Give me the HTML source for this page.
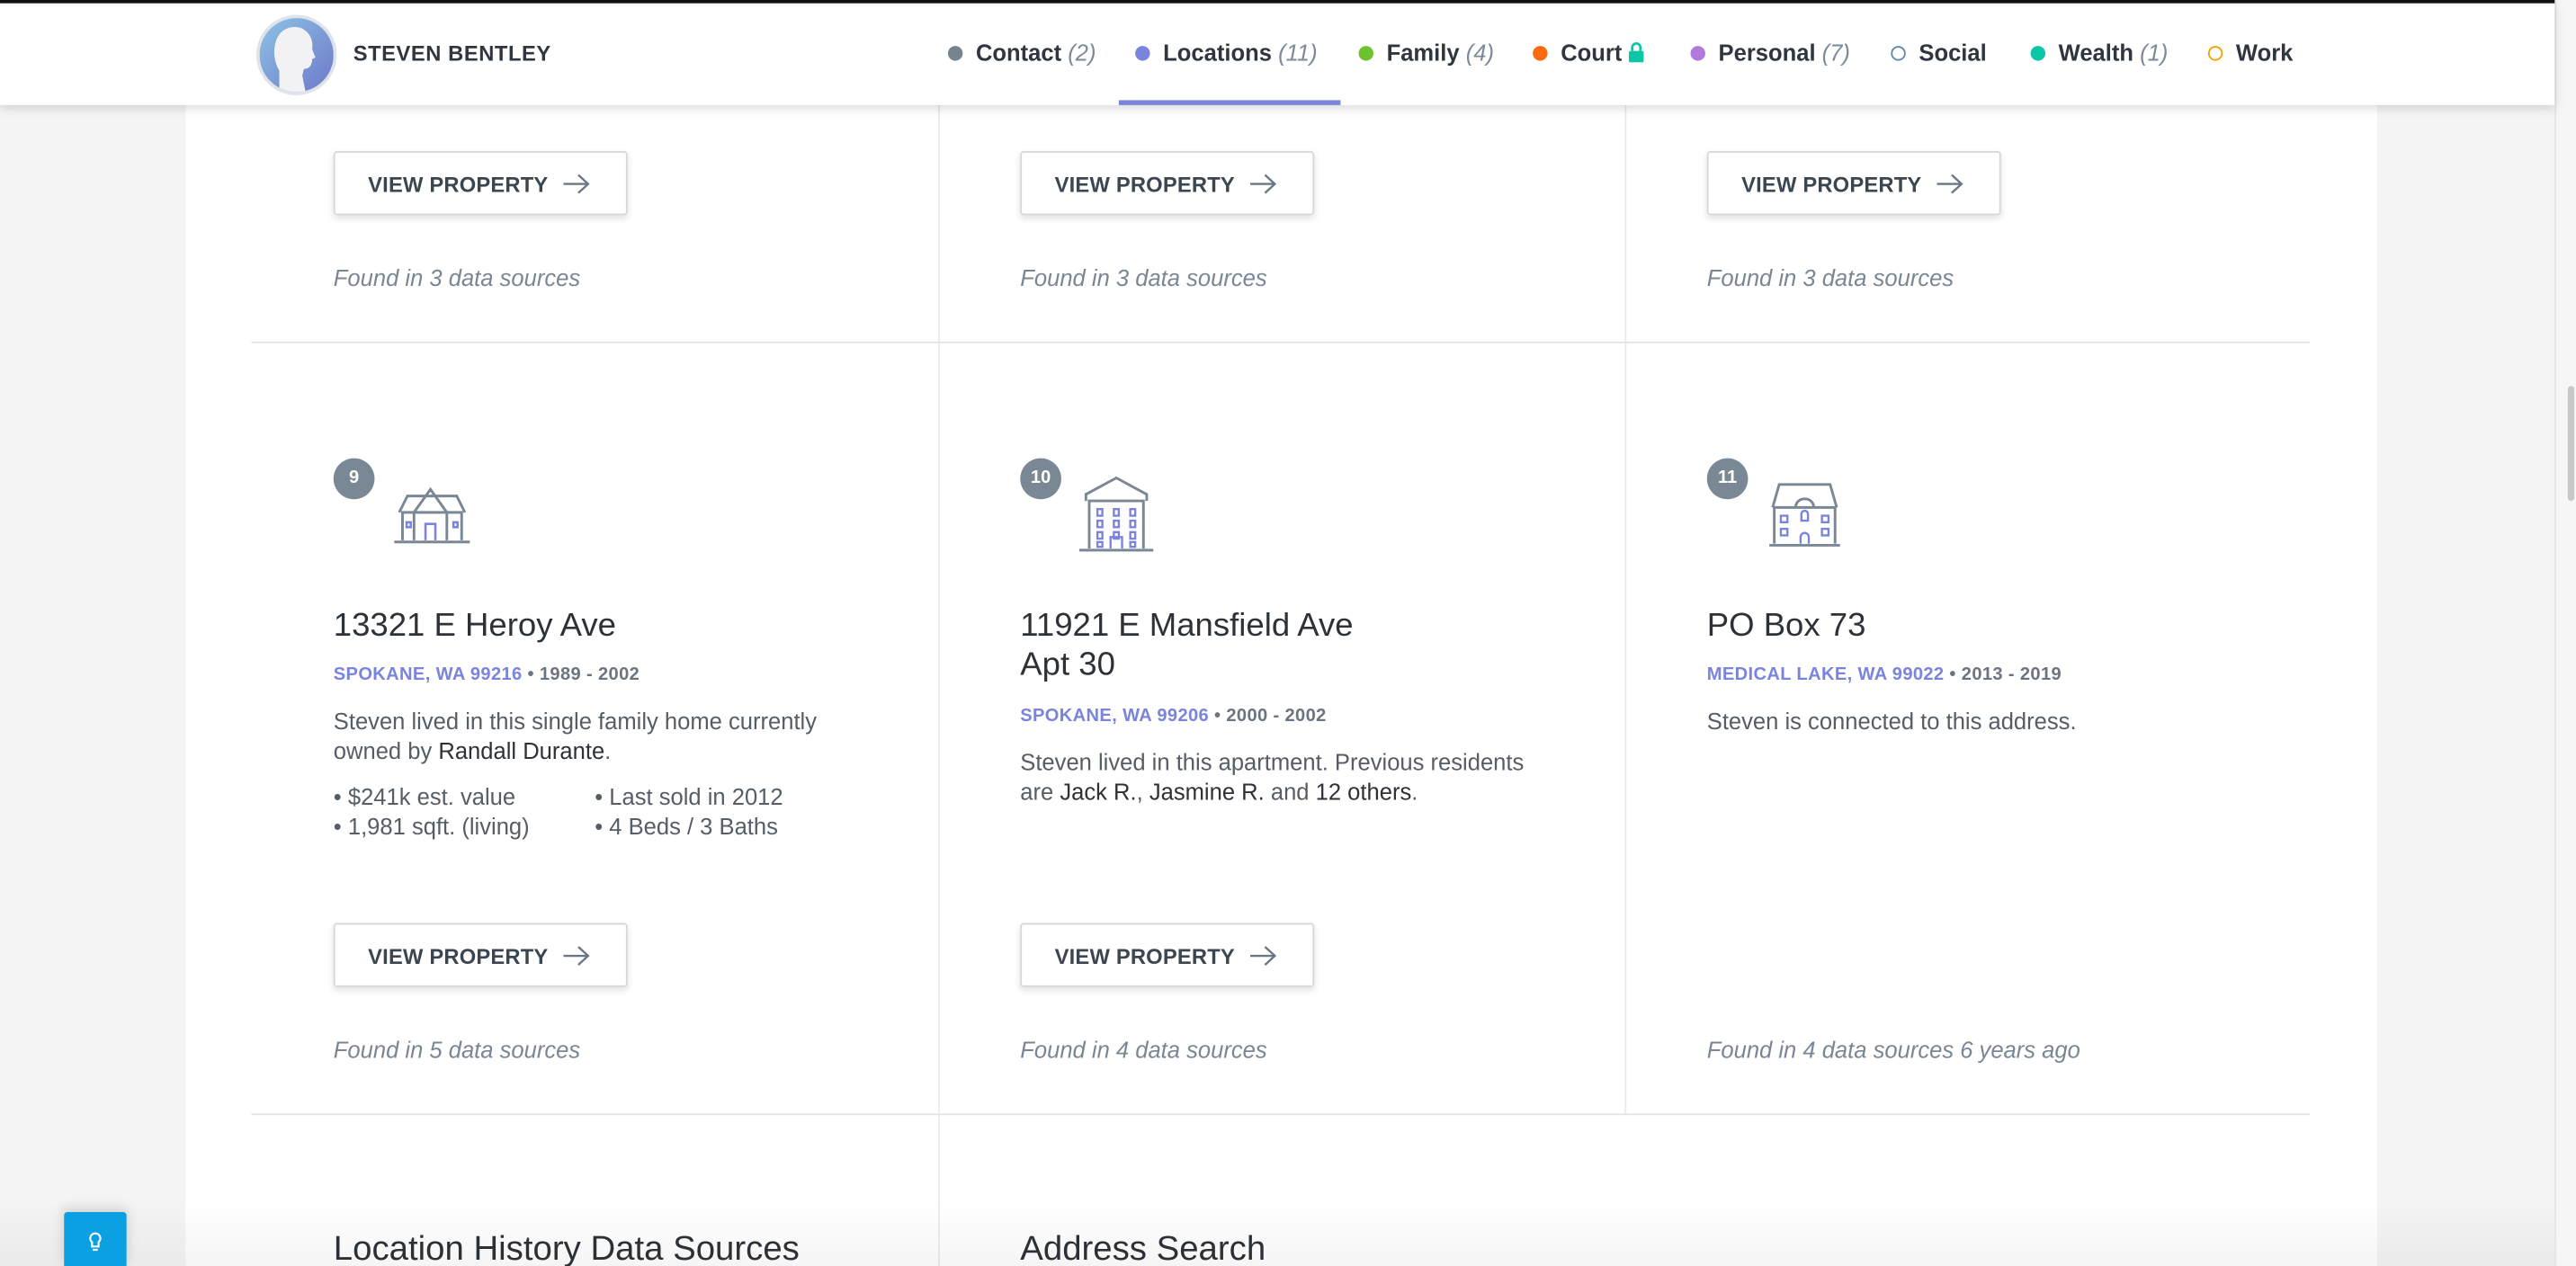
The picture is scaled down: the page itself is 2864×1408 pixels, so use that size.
<!DOCTYPE html>
<html><head><meta charset="utf-8"><style>
*{margin:0;padding:0;box-sizing:border-box}
html,body{width:2864px;height:1408px;overflow:hidden;background:#f4f4f4}
#w{position:absolute;left:0;top:0;width:1568px;height:771px;transform:scale(1.826531);transform-origin:0 0;font-family:"Liberation Sans",sans-serif;overflow:hidden;background:#f4f4f4}
.abs{position:absolute}
.panel{left:113px;top:0;width:1334px;height:771px;background:#fff}
.hdr{left:0;top:0;width:1555px;height:64px;background:#fff;border-top:2px solid #111;box-shadow:0 2px 6px rgba(0,0,0,.15);z-index:5}
.sb{left:1555px;top:0;width:13px;height:771px;background:#f6f6f6;border-left:1px solid #e4e4e4}
.thumb{left:1563px;top:235px;width:4px;height:70px;background:#c8c8c8;border-radius:2px}
.nav{top:22px;font-size:14px;font-weight:bold;color:#2f3640;white-space:nowrap}
.nav i{font-weight:normal;color:#7d8a99}
.dot{width:9px;height:9px;border-radius:50%;display:inline-block;margin-right:8px;vertical-align:0}
.vl{width:1px;background:#ebebeb}
.hl{height:1px;background:#e4e4e4}
.btn{width:179px;height:39px;border:1px solid #d6d9dc;border-radius:2px;box-shadow:0 2px 4px rgba(0,0,0,.12);background:#fff;font-size:13px;font-weight:bold;color:#3c4650;letter-spacing:.1px;padding:12px 0 0 20px;white-space:nowrap}
.btn svg{vertical-align:-1px;margin-left:9px}
.found{font-size:14px;font-style:italic;color:#7a8694}
.badge{width:25px;height:25px;border-radius:50%;background:#798894;color:#fff;font-size:11px;font-weight:bold;text-align:center;line-height:25px}
.title{font-size:20px;color:#2c3238;line-height:24px}
.loc{font-size:11px;font-weight:bold;color:#7b84dc;letter-spacing:.2px}
.loc span{color:#6b7480}
.desc{font-size:14px;color:#555d66;line-height:18px;width:320px}
.desc b{font-weight:normal;color:#2c3238}
.bul{font-size:14px;color:#555d66;line-height:18px}
.h2{font-size:21px;color:#2c3238}
</style></head><body><div id="w">
<div class="abs panel"></div>
<div class="abs sb"></div><div class="abs thumb"></div>

<div class="abs vl" style="left:571px;top:64px;height:707px"></div>
<div class="abs vl" style="left:989px;top:64px;height:614px"></div>
<div class="abs hl" style="left:153px;top:208px;width:1253px"></div>
<div class="abs hl" style="left:153px;top:678px;width:1253px"></div>

<!-- row1 -->
<div class="abs btn" style="left:203px;top:92px">VIEW PROPERTY<svg width="16" height="12" viewBox="0 0 16 12"><path d="M0 6H15M9 0.5L15 6L9 11.5" fill="none" stroke="#6b7785" stroke-width="1.3"/></svg></div>
<div class="abs btn" style="left:621px;top:92px">VIEW PROPERTY<svg width="16" height="12" viewBox="0 0 16 12"><path d="M0 6H15M9 0.5L15 6L9 11.5" fill="none" stroke="#6b7785" stroke-width="1.3"/></svg></div>
<div class="abs btn" style="left:1039px;top:92px">VIEW PROPERTY<svg width="16" height="12" viewBox="0 0 16 12"><path d="M0 6H15M9 0.5L15 6L9 11.5" fill="none" stroke="#6b7785" stroke-width="1.3"/></svg></div>
<div class="abs found" style="left:203px;top:161px">Found in 3 data sources</div>
<div class="abs found" style="left:621px;top:161px">Found in 3 data sources</div>
<div class="abs found" style="left:1039px;top:161px">Found in 3 data sources</div>

<!-- row2 col1 -->
<div class="abs badge" style="left:203px;top:279px">9</div>
<svg class="abs" style="left:238px;top:294px" width="50" height="40" viewBox="0 0 50 40"><g fill="none" stroke="#7a8794" stroke-width="1.6"><path d="M2 36H48M7 35V18H43V35M5 18L10 8H40L45 18M14 35V18L24 4L34 18V35M14 35"/></g><g fill="none" stroke="#7b84dc" stroke-width="1.4"><rect x="9.5" y="24" width="2.5" height="3"/><rect x="38" y="24" width="2.5" height="3"/><path d="M21 35V25H27V35"/></g></svg>
<div class="abs title" style="left:203px;top:369px">13321 E Heroy Ave</div>
<div class="abs loc" style="left:203px;top:405px">SPOKANE, WA 99216 <span>• 1989 - 2002</span></div>
<div class="abs desc" style="left:203px;top:430px">Steven lived in this single family home currently owned by <b>Randall Durante</b>.</div>
<div class="abs bul" style="left:203px;top:476px">• $241k est. value<br>• 1,981 sqft. (living)</div>
<div class="abs bul" style="left:362px;top:476px">• Last sold in 2012<br>• 4 Beds / 3 Baths</div>
<div class="abs btn" style="left:203px;top:562px">VIEW PROPERTY<svg width="16" height="12" viewBox="0 0 16 12"><path d="M0 6H15M9 0.5L15 6L9 11.5" fill="none" stroke="#6b7785" stroke-width="1.3"/></svg></div>
<div class="abs found" style="left:203px;top:631px">Found in 5 data sources</div>

<!-- row2 col2 -->
<div class="abs badge" style="left:621px;top:279px">10</div>
<svg class="abs" style="left:655px;top:290px" width="50" height="46" viewBox="0 0 50 46"><g fill="none" stroke="#7a8794" stroke-width="1.6"><path d="M2 45H47M8 44V15H41V44M6 15V11L24.5 1L43 11V15"/></g><g fill="none" stroke="#7b84dc" stroke-width="1.3"><path d="M13 20h3v4h-3zM23 20h3v4h-3zM33 20h3v4h-3zM13 27h3v4h-3zM23 27h3v4h-3zM33 27h3v4h-3zM13 34h3v4h-3zM23 34h3v4h-3zM33 34h3v4h-3zM13 40h3v3h-3zM33 40h3v3h-3zM21 44V37H28V44"/></g></svg>
<div class="abs title" style="left:621px;top:369px">11921 E Mansfield Ave<br>Apt 30</div>
<div class="abs loc" style="left:621px;top:430px">SPOKANE, WA 99206 <span>• 2000 - 2002</span></div>
<div class="abs desc" style="left:621px;top:455px">Steven lived in this apartment. Previous residents are <b>Jack R.</b>, <b>Jasmine R.</b> and <b>12 others</b>.</div>
<div class="abs btn" style="left:621px;top:562px">VIEW PROPERTY<svg width="16" height="12" viewBox="0 0 16 12"><path d="M0 6H15M9 0.5L15 6L9 11.5" fill="none" stroke="#6b7785" stroke-width="1.3"/></svg></div>
<div class="abs found" style="left:621px;top:631px">Found in 4 data sources</div>

<!-- row2 col3 -->
<div class="abs badge" style="left:1039px;top:279px">11</div>
<svg class="abs" style="left:1075px;top:293px" width="48" height="42" viewBox="0 0 48 42"><g fill="none" stroke="#7a8794" stroke-width="1.6"><path d="M2 39H45M5 38V16H42V38M4 16L8 2H39L43 16"/><path d="M18 16C18 9 29 9 29 16"/></g><g fill="none" stroke="#7b84dc" stroke-width="1.3"><path d="M9 21h4v4h-4zM34 21h4v4h-4zM9 29h4v4h-4zM34 29h4v4h-4zM21.5 24v-4a2 2 0 0 1 4 0v4zM21 38v-4a2.5 2.5 0 0 1 5 0v4"/></g></svg>
<div class="abs title" style="left:1039px;top:369px">PO Box 73</div>
<div class="abs loc" style="left:1039px;top:405px">MEDICAL LAKE, WA 99022 <span>• 2013 - 2019</span></div>
<div class="abs desc" style="left:1039px;top:430px">Steven is connected to this address.</div>
<div class="abs found" style="left:1039px;top:631px">Found in 4 data sources 6 years ago</div>

<!-- bottom -->
<div class="abs h2" style="left:203px;top:749px">Location History Data Sources</div>
<div class="abs h2" style="left:621px;top:749px">Address Search</div>
<div class="abs" style="left:0;top:730px;width:1555px;height:41px;background:linear-gradient(rgba(0,0,0,0),rgba(0,0,0,.04))"></div>
<div class="abs" style="left:39px;top:738px;width:38px;height:33px;background:#0aa0e2;border-radius:2px 2px 0 0;box-shadow:0 -2px 8px rgba(0,0,0,.15)"><svg style="position:absolute;left:14px;top:12px" width="10" height="14" viewBox="0 0 10 14"><path d="M5 1a3 3 0 0 0-2 5.3V9h4V6.3A3 3 0 0 0 5 1zM3.5 11h3" fill="none" stroke="#fff" stroke-width="1.2"/></svg></div>

<!-- header -->
<div class="abs hdr">
<div class="abs" style="left:156px;top:7px;width:49px;height:49px;border-radius:50%;background:linear-gradient(135deg,#8cc3e6,#6f78c8);border:2px solid #dfe3ea;overflow:hidden"><svg width="45" height="45" viewBox="0 0 45 45"><path d="M12 45V32C9 27 8 20 10 14C12 7 19 4 25 6C30 8 33 13 32 19L34 24L32 25C32 29 30 31 27 31L26 35L28 45Z" fill="#f2f2f4"/></svg></div>
<div class="abs" style="left:215px;top:23px;font-size:13px;font-weight:bold;color:#2f3640;letter-spacing:.3px">STEVEN BENTLEY</div>
<div class="abs nav" style="left:577px"><span class="dot" style="background:#768490"></span>Contact <i>(2)</i></div>
<div class="abs nav" style="left:691px"><span class="dot" style="background:#7b84dc"></span>Locations <i>(11)</i></div>
<div class="abs nav" style="left:827px"><span class="dot" style="background:#6fc22f"></span>Family <i>(4)</i></div>
<div class="abs nav" style="left:933px"><span class="dot" style="background:#fb6a10"></span>Court <svg width="10" height="13" viewBox="0 0 10 13" style="vertical-align:-1px"><path d="M2.5 6V4a2.5 2.5 0 0 1 5 0v2" fill="none" stroke="#0dc6a8" stroke-width="1.5"/><rect x="0.5" y="6" width="9" height="7" rx="1" fill="#0dc6a8"/></svg></div>
<div class="abs nav" style="left:1029px"><span class="dot" style="background:#b07bdc"></span>Personal <i>(7)</i></div>
<div class="abs nav" style="left:1151px"><span class="dot" style="border:1.5px solid #5e86b0"></span>Social</div>
<div class="abs nav" style="left:1236px"><span class="dot" style="background:#0dc6a8"></span>Wealth <i>(1)</i></div>
<div class="abs nav" style="left:1344px"><span class="dot" style="border:1.5px solid #f5a000"></span>Work</div>
<div class="abs" style="left:681px;top:59px;width:135px;height:3px;background:#7b84dc"></div>
</div>
</div></body></html>
